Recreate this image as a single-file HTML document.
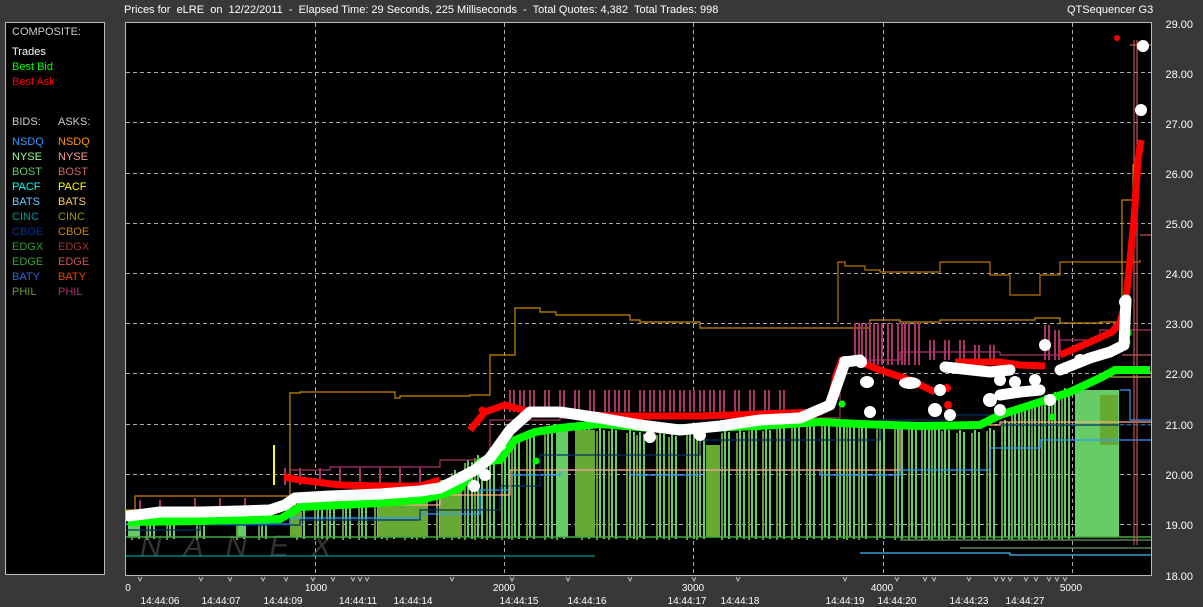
<!DOCTYPE html>
<html><head><meta charset="utf-8"><style>
html,body{margin:0;padding:0;background:#383838;width:1203px;height:607px;overflow:hidden;font-family:"Liberation Sans",sans-serif;}
.t{position:absolute;font-size:11px;color:#fff;white-space:nowrap;}
#leg{position:absolute;left:5px;top:22px;width:98px;height:551px;border:1px solid #bbb;background:#000;}
#leg div{position:absolute;font-size:11px;white-space:nowrap;}
</style></head><body>
<div class="t" style="left:124px;top:4px;">Prices for&nbsp; eLRE&nbsp; on&nbsp; 12/22/2011&nbsp; -&nbsp; Elapsed Time: 29 Seconds, 225 Milliseconds&nbsp; -&nbsp; Total Quotes: 4,382&nbsp; Total Trades: 998</div>
<div class="t" style="left:1067px;top:4px;">QTSequencer G3</div>
<div id="leg">
<div style="left:6px;top:3px;color:#ccc">COMPOSITE:</div>
<div style="left:6px;top:23px;color:#fff">Trades</div>
<div style="left:6px;top:38px;color:#0f0">Best Bid</div>
<div style="left:6px;top:53px;color:#f00">Best Ask</div>
<div style="left:6px;top:93px;color:#ccc">BIDS:</div><div style="left:52px;top:93px;color:#ccc">ASKS:</div>
<div style="left:6px;top:113px;color:#39f">NSDQ</div><div style="left:52px;top:113px;color:#f90">NSDQ</div>
<div style="left:6px;top:128px;color:#9f9">NYSE</div><div style="left:52px;top:128px;color:#f99">NYSE</div>
<div style="left:6px;top:143px;color:#6c6">BOST</div><div style="left:52px;top:143px;color:#c66">BOST</div>
<div style="left:6px;top:158px;color:#0ff">PACF</div><div style="left:52px;top:158px;color:#ff0">PACF</div>
<div style="left:6px;top:173px;color:#6cf">BATS</div><div style="left:52px;top:173px;color:#fc6">BATS</div>
<div style="left:6px;top:188px;color:#099">CINC</div><div style="left:52px;top:188px;color:#990">CINC</div>
<div style="left:6px;top:203px;color:#039">CBOE</div><div style="left:52px;top:203px;color:#c80">CBOE</div>
<div style="left:6px;top:218px;color:#393">EDGX</div><div style="left:52px;top:218px;color:#933">EDGX</div>
<div style="left:6px;top:233px;color:#3a3">EDGE</div><div style="left:52px;top:233px;color:#c55">EDGE</div>
<div style="left:6px;top:248px;color:#36c">BATY</div><div style="left:52px;top:248px;color:#e40">BATY</div>
<div style="left:6px;top:263px;color:#693">PHIL</div><div style="left:52px;top:263px;color:#a36">PHIL</div>
</div>
<svg width="1203" height="607" style="position:absolute;left:0;top:0" xmlns="http://www.w3.org/2000/svg">
<defs><clipPath id="c"><rect x="126" y="23" width="1025" height="552"/></clipPath>
<path id="gv" d="M135 520V537M150 518V537M170 518V537M200 516V537M240 516V537M262 515V537M300 505V537M318 505V537M330 500V537M346 500V537M362 495V537M378 495V537M390 495V537M408 490V537M420 490V537M440 480V537M455 470V537M468 460V537M478 455V537M490 450V537M505 440V537M515 438V537M530 432V537M548 428V537M560 425V537M585 426V537M600 428V537M612 428V537M630 430V537M640 432V537M660 432V537M672 434V537M690 432V537M700 432V537M725 430V537M740 430V537M752 428V537M766 428V537M780 426V537M795 424V537M810 420V537M825 418V537M840 420V537M850 422V537M862 424V537M880 426V537M898 426V537M912 426V537M925 424V537M935 424V537M945 428V537M960 430V537M975 430V537M990 428V537M1005 420V537M1015 410V537M1025 405V537M1035 400V537M1045 395V537M1055 392V537M1065 388V537"/>
<path id="pv" d="M510 390V412M520 390V412M530 390V412M545 390V412M560 390V412M575 390V412M590 390V412M605 390V412M615 390V412M625 390V412M640 390V412M650 390V412M660 390V412M670 390V412M680 390V412M690 390V412M700 390V412M710 390V412M720 390V412M735 390V412M750 390V412M765 390V412M780 390V412M855 323V365M862 323V365M870 323V365M878 323V365M888 323V365M898 323V365M905 323V365M915 323V365M930 340V360M945 340V360M960 340V360M975 345V360M990 345V360M1045 325V360M1055 330V360"/>
</defs>
<rect x="125.5" y="22.5" width="1026" height="553" fill="#000" stroke="#bbb"/>
<g clip-path="url(#c)">
<text x="140" y="556" font-family="Liberation Sans" font-style="italic" font-size="30" fill="#333" letter-spacing="22">NANEX</text>
<g stroke="#aaa" stroke-dasharray="4,3" stroke-width="1">
<path d="M126 72.5H1151M126 122.5H1151M126 173.5H1151M126 223.5H1151M126 273.5H1151M126 323.5H1151M126 373.5H1151M126 424.5H1151M126 474.5H1151M126 524.5H1151"/>
<path d="M315.5 23V575M504.5 23V575M693.5 23V575M883.5 23V575M1072.5 23V575"/>
</g>
<g stroke="#6c6" stroke-width="2">
<use href="#gv"/><use href="#gv" transform="translate(4,2)"/><use href="#gv" stroke="#693" transform="translate(-3,3)"/>
</g>
<g fill="#6c6"><rect x="556" y="425" width="12" height="112"/><rect x="1075" y="390" width="44" height="147"/><rect x="128" y="525" width="10" height="12"/><rect x="238" y="520" width="8" height="17"/></g>
<g fill="#6a3"><rect x="378" y="500" width="50" height="37"/><rect x="440" y="480" width="22" height="57"/><rect x="706" y="445" width="14" height="92"/><rect x="1100" y="395" width="18" height="50"/><rect x="290" y="512" width="12" height="25"/><rect x="575" y="430" width="20" height="107"/></g>
<path d="M126 537H1151" stroke="#4a4" stroke-width="1.5"/>
<g fill="none" stroke-width="1.2">
<path d="M126 524H290V518H420V514H480V490H510V475H560V470H630V475H700V470H760V470H820V475H900V470H990V448H1040V440H1151" stroke="#39f"/>
<path d="M126 530H200V525H300V520H420V510H500V486H540V455H620V455H700V440H880V420H950V415H1000V425H1151" stroke="#036"/>
<path d="M126 512H280V505H440V495H510V470H900V425H1000V422H1151" stroke="#fa8"/>
<path d="M860 553H1010V555H1151" stroke="#4bf"/>
<path d="M126 556H595" stroke="#099"/>
<path d="M900 540H1151M960 548H1151" stroke="#696"/>
<path d="M1120 390H1130V420H1151" stroke="#39f"/>
</g>
<g fill="none" stroke-width="1.2">
<path d="M126 510H135V496H290V393H300V392H395V398H400V396H470V395H490V355H515V308H540V312H556V315H630V320H640V322H700V328H870V320H900V322H940V320H1035V318H1060V323H1100V322H1120" stroke="#c80"/>
<path d="M838 322V262H845V266H865V270H880V272H940V262H945V262H990V275H1010V295H1040V275H1060V262H1100V262H1140V260" stroke="#b70"/>
<path d="M290 470H330V467H440V460H490V420H560V418H840V360H900V352H1000V355H1060V340H1100V330H1151" stroke="#a36"/>
<path d="M1134 40V545M1137 40V545" stroke="#b55"/>
<path d="M1122 330V200H1133V165H1140" stroke="#c80"/>
<path d="M1130 45H1151M1140 235H1151M1122 355H1151" stroke="#b55"/>
<path d="M1110 372H1151M1110 377H1151" stroke="#aa4"/>
</g>
<g stroke="#a36" stroke-width="2"><use href="#pv"/><use href="#pv" transform="translate(4,0)"/></g>
<path d="M274 445V485" stroke="#ff0" stroke-width="2"/>
<g stroke="#a36" stroke-width="2"><path d="M285 468V485M300 468V485M320 468V485M340 468V485M360 468V485M380 468V485M400 468V485M420 468V485M140 500V510M160 500V510M195 498V510M220 498V510M245 498V510"/></g>
<path d="M128 522L200 521L280 519L300 507L340 505L380 503L420 500L440 495L460 488L480 462L500 460L515 440L535 432L560 428L600 424L650 428L700 428L760 426L820 422L860 424L920 426L980 425L1000 415L1040 402L1070 392L1100 378L1115 370L1150 370" fill="none" stroke="#0f0" stroke-width="8"/>
<g fill="#0f0"><circle cx="536" cy="461" r="3.5"/><circle cx="842" cy="404" r="3.5"/><circle cx="1128" cy="333" r="3.5"/><circle cx="1127" cy="342" r="3.5"/><circle cx="1052" cy="417" r="3.5"/></g>
<path d="M284 477L300 480L340 485L380 486L420 486L440 480M470 430L485 412L505 405L530 412L560 414L620 416L700 416L760 414L820 412L830 405L836 375L842 360L860 362L880 370L910 380L935 392M955 362L1000 362L1020 365L1045 366M1060 355L1090 342L1112 332L1120 322L1126 300L1130 260L1134 220L1138 160L1141 140" fill="none" stroke="#f00" stroke-width="7"/>
<g fill="#f00"><circle cx="1117" cy="38" r="3"/><circle cx="482" cy="410" r="3.5"/><circle cx="490" cy="410" r="3.5"/><circle cx="947" cy="388" r="4"/><circle cx="948" cy="405" r="4"/></g>
<path d="M128 516L160 512L200 512L240 511L270 510L285 505L295 498L330 496L380 494L420 491L440 488L460 478L475 470L490 458L510 430L530 412L560 412L600 418L640 425L680 430L720 426L760 420L800 418L830 405L845 362L860 360M945 367L990 372L1010 370M1000 395L1020 392L1040 390M1060 370L1090 358L1110 352L1124 345L1126 300" fill="none" stroke="#fff" stroke-width="11" stroke-linecap="round" stroke-linejoin="round"/>
<g fill="#fff"><ellipse cx="867" cy="382" rx="7" ry="6"/><ellipse cx="910" cy="383" rx="11" ry="6"/><circle cx="845" cy="362" r="6"/><circle cx="861" cy="362" r="6"/><circle cx="950" cy="415" r="6"/><circle cx="935" cy="410" r="7"/><circle cx="990" cy="400" r="7"/><circle cx="1000" cy="410" r="6"/><circle cx="1080" cy="360" r="6"/><circle cx="1125" cy="302" r="6"/><circle cx="1141" cy="110" r="6"/><circle cx="1143" cy="46" r="6"/><circle cx="650" cy="437" r="6"/><circle cx="700" cy="435" r="6"/><circle cx="870" cy="412" r="6"/><circle cx="1045" cy="345" r="6"/><circle cx="1050" cy="400" r="6"/><circle cx="940" cy="390" r="6"/><circle cx="1000" cy="380" r="6"/><circle cx="1015" cy="382" r="6"/><circle cx="1035" cy="380" r="6"/><circle cx="500" cy="445" r="6"/><circle cx="474" cy="486" r="6"/><circle cx="485" cy="475" r="6"/></g>
</g>
<g font-family="Liberation Sans" font-size="11" fill="#fff" text-anchor="end">
<text x="1193" y="28">29.00</text><text x="1193" y="78">28.00</text><text x="1193" y="128">27.00</text><text x="1193" y="178">26.00</text><text x="1193" y="228">25.00</text><text x="1193" y="278">24.00</text><text x="1193" y="328">23.00</text><text x="1193" y="378">22.00</text><text x="1193" y="429">21.00</text><text x="1193" y="479">20.00</text><text x="1193" y="529">19.00</text><text x="1193" y="580">18.00</text>
</g>
<g font-family="Liberation Sans" font-size="10" fill="#fff" text-anchor="middle">
<text x="128" y="591">0</text><text x="316" y="591">1000</text><text x="504" y="591">2000</text><text x="693" y="591">3000</text><text x="882" y="591">4000</text><text x="1071" y="591">5000</text>
<text x="160" y="604">14:44:06</text><text x="221" y="604">14:44:07</text><text x="283" y="604">14:44:09</text><text x="358" y="604">14:44:11</text><text x="413" y="604">14:44:14</text><text x="519" y="604">14:44:15</text><text x="587" y="604">14:44:16</text><text x="687" y="604">14:44:17</text><text x="740" y="604">14:44:18</text><text x="845" y="604">14:44:19</text><text x="897" y="604">14:44:20</text><text x="969" y="604">14:44:23</text><text x="1025" y="604">14:44:27</text>
</g>
<g fill="none" stroke="#bbb" stroke-width="1">
<path d="M138 577l2 4 2-4M199 577l2 4 2-4M228 577l2 4 2-4M261 577l2 4 2-4M284 577l2 4 2-4M311 577l2 4 2-4M331 577l2 4 2-4M351 577l2 4 2-4M358 577l2 4 2-4M365 577l2 4 2-4M450 577l2 4 2-4M510 577l2 4 2-4M566 577l2 4 2-4M628 577l2 4 2-4M692 577l2 4 2-4M736 577l2 4 2-4M843 577l2 4 2-4M895 577l2 4 2-4M923 577l2 4 2-4M932 577l2 4 2-4M967 577l2 4 2-4M994 577l2 4 2-4M1001 577l2 4 2-4M1008 577l2 4 2-4M1024 577l2 4 2-4M1034 577l2 4 2-4M1047 577l2 4 2-4M1055 577l2 4 2-4M1063 577l2 4 2-4"/>
</g>
</svg>
</body></html>
